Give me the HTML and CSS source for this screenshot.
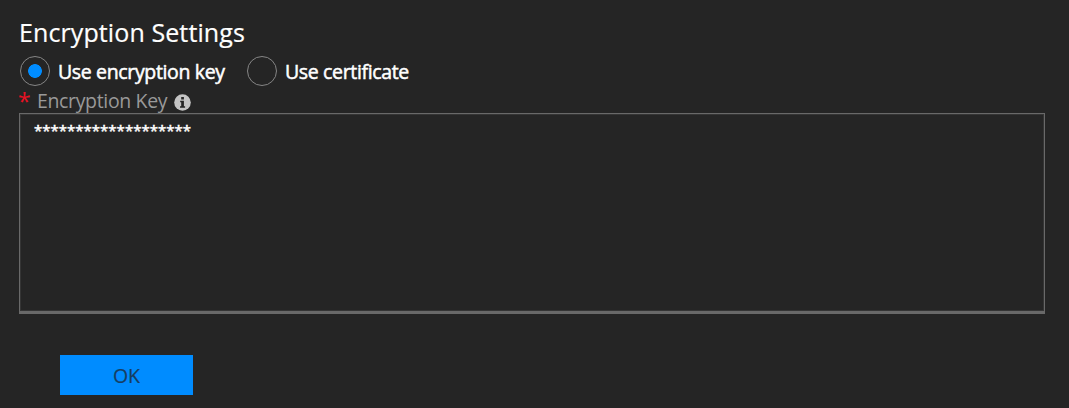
FILE: index.html
```html
<!DOCTYPE html>
<html lang="en">
<head>
<meta charset="utf-8">
<title>Encryption Settings</title>
<link rel="stylesheet" href="styles.css">
</head>
<body>
<main class="panel">
  <h1 class="title">Encryption Settings</h1>
  <div class="choices">
    <label class="choice"><input class="radio" type="radio" name="mode" checked><span class="choice-text key">Use encryption key</span></label>
    <label class="choice"><input class="radio" type="radio" name="mode"><span class="choice-text cert">Use certificate</span></label>
  </div>
  <div class="field-label">
    <span class="required">*</span>
    <span class="label-text">Encryption Key</span>
    <svg class="info" viewBox="0 0 17 17" aria-hidden="true">
      <circle cx="8.5" cy="8.5" r="8.3" fill="#c4c4c4"/>
      <path d="M7.2 3.1h2.7v2.3H7.2zM6.2 6.7h3.7v5.6h1.2v1.5H6v-1.5h1.2V8.2h-1z" fill="#252525"/>
    </svg>
  </div>
  <div class="key-box">*******************</div>
  <button class="ok" type="button">OK</button>
</main>
</body>
</html>
```
FILE: styles.css
```css
body {
  margin: 0;
  background: #252525;
  color: #fff;
  font-family: "Open Sans", sans-serif;
}
.panel {
  display: flex;
  flex-direction: column;
  align-items: flex-start;
  padding: 15px 23px 0 19px;
}
.title {
  margin: 0;
  font-size: 25px;
  line-height: 34px;
  font-weight: 400;
  letter-spacing: 0.1px;
  -webkit-text-stroke: 0.2px #fff;
  white-space: nowrap;
}
.choices {
  display: flex;
  gap: 21px;
  margin: 7px 0 0 1px;
}
.choice {
  display: flex;
  align-items: center;
  height: 30px;
}
.radio {
  appearance: none;
  box-sizing: border-box;
  width: 30px;
  height: 30px;
  margin: 0 8px 0 0;
  border: 1.5px solid #858585;
  border-radius: 50%;
}
.radio:checked {
  background: radial-gradient(circle, #008cff 6.5px, transparent 7.2px);
}
.choice-text {
  padding-top: 1px;
  font-size: 19.5px;
  line-height: 28px;
  letter-spacing: -0.35px;
  -webkit-text-stroke: 0.5px #fff;
  white-space: nowrap;
}
.key { width: 168px; }
.field-label {
  display: flex;
  height: 26px;
  margin-top: 1px;
  color: #999;
}
.required {
  width: 19px;
  margin-left: -1px;
  color: #e81123;
  font-size: 23px;
  line-height: 29px;
}
.label-text {
  width: 137px;
  font-size: 19.5px;
  line-height: 27px;
  letter-spacing: -0.35px;
  white-space: nowrap;
}
.info {
  width: 17px;
  height: 17px;
  margin-top: 7px;
}
.key-box {
  box-sizing: border-box;
  width: 1026px;
  height: 201px;
  padding: 5px 14px;
  border: 1px solid #696969;
  border-bottom-width: 3px;
  box-shadow: inset 0 0 0 1px #353535;
  font-size: 15px;
  line-height: 23px;
  -webkit-text-stroke: 0.5px #fff;
}
.ok {
  width: 133px;
  height: 40px;
  margin: 41px 0 0 41px;
  padding: 2px 0 0;
  border: 0;
  background: #008cff;
  color: #173d61;
  font: 400 19.5px/38px "Open Sans", sans-serif;
  -webkit-text-stroke: 0.2px #173d61;
}
```
